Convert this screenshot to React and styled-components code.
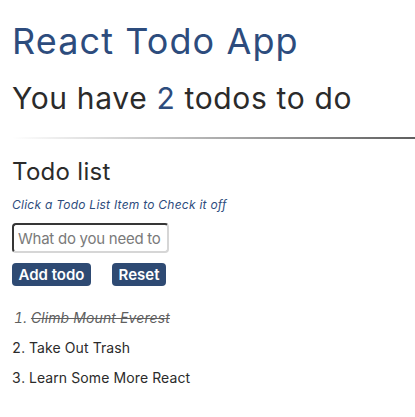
import React, { useState } from "react";
import styled, { createGlobalStyle } from "styled-components";

const GlobalStyle = createGlobalStyle`
  body {
    margin: 0;
    background: #ffffff;
    font-family: Inter, "Noto Sans", sans-serif;
    color: #2b2b2b;
  }
`;

const Page = styled.div`
  padding: 0 0 0 12px;
`;

const Title = styled.h1`
  margin: 0;
  padding-top: 21px;
  font-size: 36px;
  font-weight: 400;
  line-height: 40px;
  letter-spacing: 1.1px;
  color: #2d4c7d;
`;

const Summary = styled.h2`
  margin: 19px 0 0;
  font-size: 30px;
  font-weight: 400;
  line-height: 36px;
  letter-spacing: 0.65px;
  color: #2b2b2b;
`;

const Count = styled.span`
  color: #2d4c7d;
`;

const Rule = styled.hr`
  margin: 21px 0 0;
  border: 0;
  height: 2px;
  background: linear-gradient(to right, rgba(100, 100, 100, 0), #5f5f5f);
`;

const Section = styled.h3`
  margin: 18px 0 0;
  font-size: 24px;
  font-weight: 400;
  line-height: 30px;
  letter-spacing: 0.3px;
  color: #2b2b2b;
`;

const Hint = styled.p`
  margin: 10px 0 0;
  font-size: 12px;
  line-height: 16px;
  font-style: italic;
  letter-spacing: 0.25px;
  color: #2d4c7d;
`;

const Form = styled.form`
  margin-top: 10px;
  display: flex;
  flex-direction: column;
  align-items: flex-start;
  gap: 10px;
`;

const Input = styled.input`
  box-sizing: border-box;
  width: 157px;
  height: 30px;
  padding: 0 4px;
  font-family: Inter, "Noto Sans", sans-serif;
  font-size: 15px;
  letter-spacing: -0.25px;
  color: #333;
  border: 2px inset #d6d6d6;
  border-top-color: #8a8a8a;
  border-left-color: #8a8a8a;
  border-radius: 4px;
  outline: none;
  &::placeholder {
    color: #7a7a7a;
  }
`;

const Buttons = styled.div`
  display: flex;
  gap: 21px;
`;

const Button = styled.button`
  box-sizing: border-box;
  height: 23px;
  width: ${(p) => p.$w}px;
  padding: 0;
  border: 0;
  border-radius: 4px;
  background: #2e4a73;
  color: #ffffff;
  font-family: Inter, "Noto Sans", sans-serif;
  font-size: 15px;
  font-weight: 600;
  line-height: 23px;
  cursor: pointer;
`;

const List = styled.ol`
  margin: 17px 0 0;
  padding: 0;
  list-style-position: inside;
`;

const Item = styled.li`
  font-size: 14px;
  line-height: 30px;
  letter-spacing: 0.1px;
  color: ${(p) => (p.$done ? "#5f5f5f" : "#2b2b2b")};
  font-style: ${(p) => (p.$done ? "italic" : "normal")};
  padding-left: ${(p) => (p.$done ? "2px" : "0")};
  cursor: pointer;
`;

const ItemText = styled.span`
  text-decoration: ${(p) => (p.$done ? "line-through" : "none")};
`;

const initial = [
  { text: "Climb Mount Everest", done: true },
  { text: "Take Out Trash", done: false },
  { text: "Learn Some More React", done: false },
];

export default function App() {
  const [todos, setTodos] = useState(initial);
  const [value, setValue] = useState("");
  const remaining = todos.filter((t) => !t.done).length;

  const add = (e) => {
    e.preventDefault();
    if (!value.trim()) return;
    setTodos([...todos, { text: value.trim(), done: false }]);
    setValue("");
  };

  return (
    <Page>
      <GlobalStyle />
      <Title>React Todo App</Title>
      <Summary>
        You have <Count>{remaining}</Count> todos to do
      </Summary>
      <Rule />
      <Section>Todo list</Section>
      <Hint>Click a Todo List Item to Check it off</Hint>
      <Form onSubmit={add}>
        <Input
          placeholder="What do you need to do?"
          value={value}
          onChange={(e) => setValue(e.target.value)}
        />
        <Buttons>
          <Button type="submit" $w={79}>Add todo</Button>
          <Button type="button" $w={54} onClick={() => setTodos(initial)}>
            Reset
          </Button>
        </Buttons>
      </Form>
      <List>
        {todos.map((t, i) => (
          <Item
            key={i}
            $done={t.done}
            onClick={() =>
              setTodos(todos.map((x, j) => (j === i ? { ...x, done: !x.done } : x)))
            }
          >
            <ItemText $done={t.done}>{t.text}</ItemText>
          </Item>
        ))}
      </List>
    </Page>
  );
}
